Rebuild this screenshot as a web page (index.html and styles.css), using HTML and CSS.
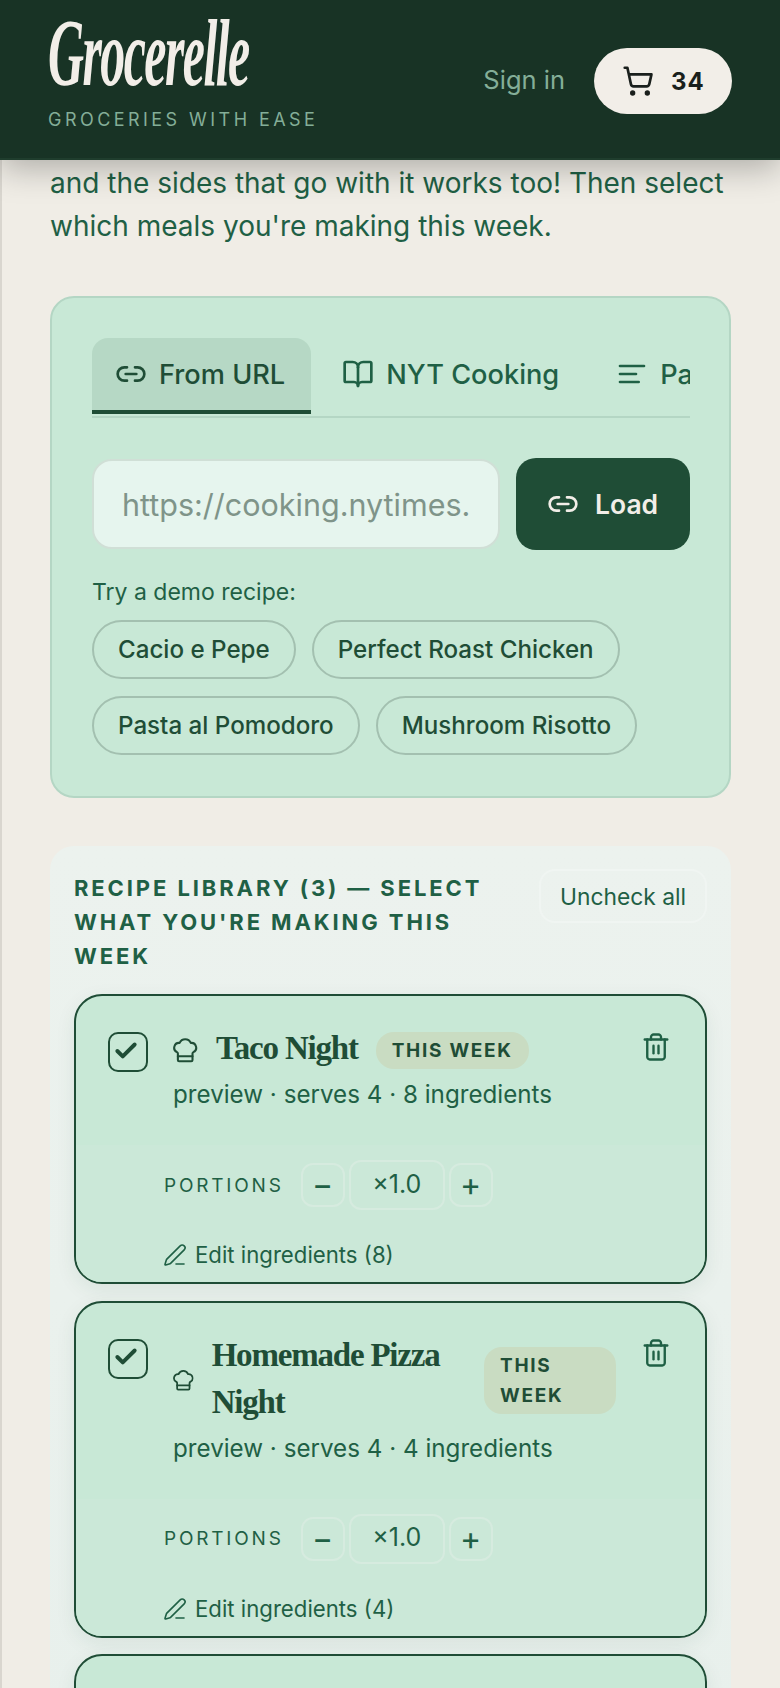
FILE: index.html
```html
<!DOCTYPE html>
<html lang="en">
<head>
<meta charset="utf-8">
<title>Grocerelle</title>
<link rel="stylesheet" href="styles.css">
</head>
<body>
<svg class="sprite" xmlns="http://www.w3.org/2000/svg">
  <symbol id="i-link" viewBox="0 0 24 24"><path d="M9 17H7A5 5 0 0 1 7 7h2"/><path d="M15 7h2a5 5 0 1 1 0 10h-2"/><line x1="8" x2="16" y1="12" y2="12"/></symbol>
  <symbol id="i-book" viewBox="0 0 24 24"><path d="M12 7v14"/><path d="M3 18a1 1 0 0 1-1-1V4a1 1 0 0 1 1-1h5a4 4 0 0 1 4 4 4 4 0 0 1 4-4h5a1 1 0 0 1 1 1v13a1 1 0 0 1-1 1h-6a3 3 0 0 0-3 3 3 3 0 0 0-3-3z"/></symbol>
  <symbol id="i-text" viewBox="0 0 24 24"><path d="M21 6H3"/><path d="M15 12H3"/><path d="M17 18H3"/></symbol>
  <symbol id="i-cart" viewBox="0 0 24 24"><circle cx="8" cy="21" r="1"/><circle cx="19" cy="21" r="1"/><path d="M2.05 2.05h2l2.66 12.42a2 2 0 0 0 2 1.58h9.78a2 2 0 0 0 1.95-1.57l1.65-7.43H5.12"/></symbol>
  <symbol id="i-chef" viewBox="2 2 20 20.5" preserveAspectRatio="xMinYMid"><path d="M17 21a1 1 0 0 0 1-1v-5.35c0-.457.316-.844.727-1.041a4 4 0 0 0-2.134-7.589 5 5 0 0 0-9.186 0 4 4 0 0 0-2.134 7.588c.411.198.727.585.727 1.041V20a1 1 0 0 0 1 1Z"/><path d="M6 17h12"/></symbol>
  <symbol id="i-trash" viewBox="0 0 24 24"><path d="M3 6h18"/><path d="M19 6v14c0 1-1 2-2 2H7c-1 0-2-1-2-2V6"/><path d="M8 6V4c0-1 1-2 2-2h4c1 0 2 1 2 2v2"/><line x1="10" x2="10" y1="11" y2="17"/><line x1="14" x2="14" y1="11" y2="17"/></symbol>
  <symbol id="i-pen" viewBox="0 0 24 24"><path d="M13 21h8"/><path d="M21.174 6.812a1 1 0 0 0-3.986-3.987L3.842 16.174a2 2 0 0 0-.5.83l-1.321 4.352a.5.5 0 0 0 .623.622l4.353-1.32a2 2 0 0 0 .83-.497z"/></symbol>
  <symbol id="i-check" viewBox="0 0 24 24"><path d="M20 6 9 17l-5-5"/></symbol>
</svg>

<header class="topbar">
  <div class="brand">
    <div class="logo">Grocerelle</div>
    <div class="tagline">GROCERIES WITH EASE</div>
  </div>
  <div class="top-actions">
    <a class="signin">Sign in</a>
    <button class="cart"><svg class="icon icon-cart"><use href="#i-cart"/></svg><span>34</span></button>
  </div>
</header>

<main class="page">
  <p class="intro">and the sides that go with it works too! Then select which meals you're making this week.</p>

  <section class="import-card">
    <div class="tabs">
      <div class="tab active"><svg class="icon icon-tab"><use href="#i-link"/></svg>From URL</div>
      <div class="tab"><svg class="icon icon-tab"><use href="#i-book"/></svg>NYT Cooking</div>
      <div class="tab"><svg class="icon icon-tab"><use href="#i-text"/></svg>Paste</div>
    </div>
    <div class="url-row">
      <input class="url-input" placeholder="https://cooking.nytimes.com/recipes/...">
      <button class="load"><svg class="icon icon-tab"><use href="#i-link"/></svg>Load</button>
    </div>
    <div class="demo-label">Try a demo recipe:</div>
    <div class="chips">
      <button class="chip">Cacio e Pepe</button>
      <button class="chip">Perfect Roast Chicken</button>
      <button class="chip">Pasta al Pomodoro</button>
      <button class="chip">Mushroom Risotto</button>
    </div>
  </section>

  <section class="library">
    <div class="library-head">
      <h2 class="library-title">RECIPE LIBRARY (3) — SELECT WHAT YOU'RE MAKING THIS WEEK</h2>
      <button class="uncheck">Uncheck all</button>
    </div>

    <article class="recipe">
      <div class="recipe-top">
        <div class="checkbox"><svg class="icon icon-check"><use href="#i-check"/></svg></div>
        <div class="recipe-info">
          <div class="recipe-title-row">
            <svg class="icon icon-chef"><use href="#i-chef"/></svg>
            <h3 class="recipe-title">Taco Night</h3>
            <span class="badge">THIS WEEK</span>
          </div>
          <div class="recipe-meta">preview · serves 4 · 8 ingredients</div>
        </div>
        <svg class="icon icon-trash"><use href="#i-trash"/></svg>
      </div>
      <div class="recipe-bottom">
        <div class="portions">
          <span class="portions-label">PORTIONS</span>
          <button class="step">−</button>
          <span class="portion-value">×1.0</span>
          <button class="step">+</button>
        </div>
        <div class="edit"><svg class="icon icon-pen"><use href="#i-pen"/></svg>Edit ingredients (8)</div>
      </div>
    </article>

    <article class="recipe">
      <div class="recipe-top">
        <div class="checkbox"><svg class="icon icon-check"><use href="#i-check"/></svg></div>
        <div class="recipe-info">
          <div class="recipe-title-row">
            <svg class="icon icon-chef"><use href="#i-chef"/></svg>
            <h3 class="recipe-title">Homemade Pizza Night</h3>
            <span class="badge">THIS WEEK</span>
          </div>
          <div class="recipe-meta">preview · serves 4 · 4 ingredients</div>
        </div>
        <svg class="icon icon-trash"><use href="#i-trash"/></svg>
      </div>
      <div class="recipe-bottom">
        <div class="portions">
          <span class="portions-label">PORTIONS</span>
          <button class="step">−</button>
          <span class="portion-value">×1.0</span>
          <button class="step">+</button>
        </div>
        <div class="edit"><svg class="icon icon-pen"><use href="#i-pen"/></svg>Edit ingredients (4)</div>
      </div>
    </article>

    <article class="recipe recipe-next"></article>
  </section>
</main>
</body>
</html>
```
FILE: styles.css
```css
* { box-sizing: border-box; }
html, body { margin: 0; height: 1688px; overflow: hidden; }
body { background: #f0ede6; font-family: Inter, "Noto Sans", sans-serif; color: #1f6045; }
button, input { font-family: inherit; }
.sprite { display: none; }
.icon { fill: none; stroke: currentColor; stroke-width: 2; stroke-linecap: round; stroke-linejoin: round; flex: none; }

.topbar { position: relative; z-index: 2; height: 160px; padding: 0 48px; display: flex; justify-content: space-between; align-items: flex-start; background: #183325; border-bottom: 2px solid #1f3d2d; box-shadow: 0 8px 32px rgba(0, 0, 0, .28); }
.brand { padding-top: 4px; }
.logo { height: 98px; font-family: "Liberation Serif", serif; font-style: italic; font-weight: 700; font-size: 96px; line-height: 98px; letter-spacing: -3px; color: #f2eee8; transform: scaleX(.52); transform-origin: left center; white-space: nowrap; }
.tagline { margin-top: 7px; font-size: 18px; line-height: 22px; letter-spacing: 3.45px; color: #84ae98; }
.top-actions { display: flex; align-items: center; gap: 29px; padding-top: 48px; }
.signin { margin-bottom: 3px; font-size: 25.5px; color: #84ae98; }
.cart { display: flex; align-items: center; gap: 17px; height: 66px; width: 138px; padding: 0 0 0 28px; border: 0; border-radius: 33px; background: #f2eee8; color: #1a1f1c; font-size: 24px; font-weight: 700; letter-spacing: 1px; }
.icon-cart { width: 32px; height: 32px; }

.page { height: 1528px; padding: 2px 49px 0 48px; border-left: 2px solid #d9d6cf; overflow: hidden; }
.intro { margin: 0 0 48px; font-size: 28px; line-height: 43.2px; }

.import-card { height: 502px; padding: 40px 39px 0 40px; background: #c8e8d6; border: 2px solid #b4d6c4; border-radius: 24px; }
.tabs { display: flex; gap: 8px; height: 80px; overflow: hidden; border-bottom: 2px solid #b4d6c4; }
.tab { display: flex; align-items: center; gap: 12px; flex: none; height: 76px; padding: 0 26px 4px 23px; border-radius: 16px 16px 0 0; font-size: 27.2px; font-weight: 500; white-space: nowrap; color: #1f6045; }
.tab.active { padding-bottom: 0; background: #b6d8c5; color: #1f4d36; border-bottom: 4px solid #1f4d36; }
.icon-tab { width: 32px; height: 32px; }
.url-row { display: flex; gap: 16px; margin-top: 40px; }
.url-input { flex: 1; min-width: 0; height: 90px; margin-top: 1px; padding: 0 28px; background: #e6f5ee; border: 2px solid #d0dfd6; border-radius: 20px; font-size: 30.5px; outline: none; }
.url-input::placeholder { color: #7f9489; opacity: 1; }
.load { display: flex; align-items: center; gap: 16px; flex: none; width: 174px; height: 92px; padding: 0 0 0 31px; background: #1f4d36; color: #f2eee8; border: 0; border-radius: 20px; font-size: 26.5px; font-weight: 600; }
.demo-label { margin-top: 28px; font-size: 23px; line-height: 28px; color: #1f6045; }
.chips { display: flex; flex-wrap: wrap; gap: 17px 16px; margin-top: 14px; }
.chip { height: 59px; padding: 0 24px; background: transparent; border: 2px solid #a3c0b0; border-radius: 30px; font-size: 24.15px; font-weight: 500; color: #1f4d36; }

.library { margin-top: 48px; height: 900px; padding: 23px 24px 0; background: linear-gradient(#ecf2ee, #e8f0ec); border-radius: 24px; }
.library-head { display: flex; justify-content: space-between; align-items: flex-start; gap: 24px; margin-bottom: 21px; }
.library-title { margin: 2px 0 0; flex: 1; font-size: 22px; line-height: 34px; font-weight: 700; letter-spacing: 2.9px; color: #1f6045; }
.uncheck { flex: none; width: 168px; height: 54px; padding: 0; background: transparent; border: 2px solid #f0f5f2; border-radius: 16px; font-size: 22.8px; font-weight: 400; color: #1f6045; }

.recipe { margin-bottom: 16.5px; padding-top: 29px; background: #c8e8d6; border: 2px solid #1f4d36; border-radius: 28px; box-shadow: 0 6px 20px rgba(31, 77, 54, .08); }
.recipe-next { height: 200px; }
.recipe-top { display: flex; align-items: flex-start; gap: 25px; padding: 0 34px 0 32px; }
.checkbox { flex: none; width: 40px; height: 40px; margin-top: 7px; display: flex; align-items: center; justify-content: center; border: 2px solid #1f4d36; border-radius: 10px; color: #1f4d36; }
.icon-check { width: 26px; height: 26px; stroke-width: 3.6; margin: -3px 4px 0 0; }
.recipe-info { flex: 1; min-width: 0; }
.recipe-title-row { display: flex; align-items: center; gap: 18px; }
.icon-chef { width: 25px; height: 25px; flex: 0 1 25px; min-width: 0; margin-top: 4px; stroke-width: 1.7; color: #1f4d36; }
.recipe-title { margin: 0; font-family: "Liberation Serif", serif; font-size: 33px; line-height: 47px; font-weight: 700; letter-spacing: -1.2px; color: #1f4d36; }
.badge { margin-top: 4px; padding: 3.5px 16px; background: #c9dcc2; border-radius: 18px; font-size: 19px; line-height: 30px; font-weight: 700; letter-spacing: 1.7px; color: #1f4d36; }
.recipe-meta { margin-top: 5px; font-size: 24.2px; line-height: 36px; color: #1f6045; }
.icon-trash { width: 30px; height: 30px; margin-top: 6.5px; stroke-width: 1.9; color: #1f6045; }
.recipe-bottom { margin-top: 32px; padding: 15px 32px 11px 88px; background: #cbe8d8; border-radius: 0 0 26px 26px; }
.portions { display: flex; align-items: center; gap: 4px; }
.portions-label { margin-right: 13px; font-size: 19px; letter-spacing: 2.8px; color: #1f6045; }
.step { width: 44px; height: 44px; padding: 0; background: transparent; border: 2px solid #d6ebdf; border-radius: 12px; font-size: 32px; line-height: 1; color: #1f6045; }
.portion-value { width: 96px; height: 50px; display: flex; align-items: center; justify-content: center; padding-bottom: 3px; border: 2px solid #d6ebdf; border-radius: 12px; font-size: 25px; color: #1f6045; }
.edit { display: flex; align-items: center; gap: 8px; margin-top: 29px; font-size: 22.2px; line-height: 32px; color: #1f6045; }
.icon-pen { width: 24px; height: 24px; margin-left: -1px; stroke-width: 1.6; }
```
